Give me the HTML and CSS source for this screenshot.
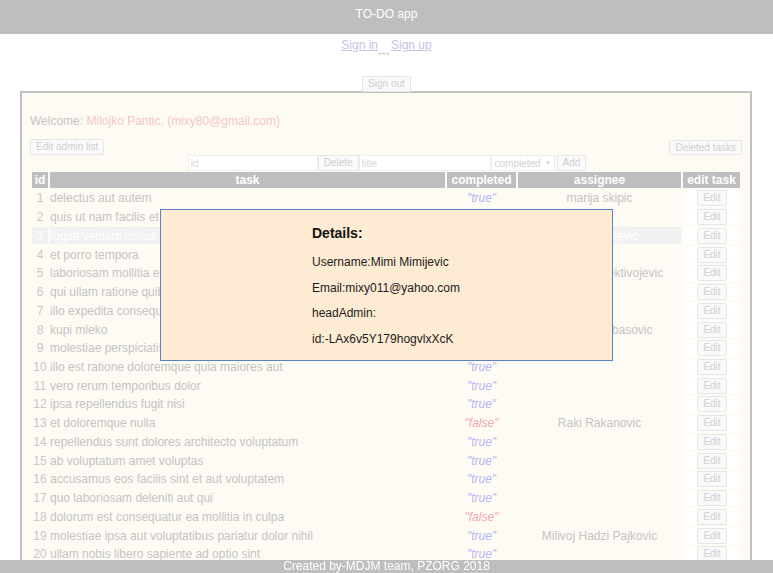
FILE: index.html
```html
<!DOCTYPE html>
<html>
<head>
<meta charset="utf-8">
<title>TO-DO app</title>
<link rel="stylesheet" href="styles.css">
</head>
<body>
<header class="topbar">TO-DO app</header>
<nav class="auth">
  <a href="#" class="auth-link">Sign in</a><span class="stars">***</span><a href="#" class="auth-link">Sign up</a>
</nav>
<div class="signout-row"><button class="btn">Sign out</button></div>
<main class="panel">
  <p class="welcome">Welcome: <span class="user">Milojko Pantic, (mixy80@gmail.com)</span></p>
  <div class="tools">
    <button class="btn">Edit admin list</button>
    <button class="btn">Deleted tasks</button>
  </div>
  <div class="form-row">
    <input class="field field-id" placeholder="id"><button class="btn btn-sq">Delete</button><input class="field field-title" placeholder="title"><span class="select">completed</span><button class="btn btn-sq">Add</button>
  </div>
  <table class="tasks">
    <thead>
      <tr><th class="c-id">id</th><th class="c-task">task</th><th class="c-done">completed</th><th class="c-who">assignee</th><th class="c-edit">edit task</th></tr>
    </thead>
    <tbody id="rows"></tbody>
  </table>
</main>
<div class="modal">
  <div class="modal-body">
    <h3 class="modal-title">Details:</h3>
    <p>Username:Mimi Mimijevic</p>
    <p>Email:mixy011@yahoo.com</p>
    <p>headAdmin:</p>
    <p>id:-LAx6v5Y179hogvlxXcK</p>
  </div>
</div>
<footer class="footer">Created by-MDJM team, PZORG 2018</footer>
<script src="app.js"></script>
</body>
</html>
```
FILE: app.js
```js
var data = [
  ["delectus aut autem", true, "marija skipic"],
  ["quis ut nam facilis et officia qui", true, ""],
  ["fugiat veniam minus", true, "Mimi Mimijevic"],
  ["et porro tempora", true, ""],
  ["laboriosam mollitia et enim quasi adipisci quia provident illum", true, "Objektiva Objektivojevic"],
  ["qui ullam ratione quibusdam voluptatem quia omnis", true, ""],
  ["illo expedita consequatur quia in", true, ""],
  ["kupi mleko", true, "Ababan Ababasovic"],
  ["molestiae perspiciatis ipsa", true, ""],
  ["illo est ratione doloremque quia maiores aut", true, ""],
  ["vero rerum temporibus dolor", true, ""],
  ["ipsa repellendus fugit nisi", true, ""],
  ["et doloremque nulla", false, "Raki Rakanovic"],
  ["repellendus sunt dolores architecto voluptatum", true, ""],
  ["ab voluptatum amet voluptas", true, ""],
  ["accusamus eos facilis sint et aut voluptatem", true, ""],
  ["quo laboriosam deleniti aut qui", true, ""],
  ["dolorum est consequatur ea mollitia in culpa", false, ""],
  ["molestiae ipsa aut voluptatibus pariatur dolor nihil", true, "Milivoj Hadzi Pajkovic"],
  ["ullam nobis libero sapiente ad optio sint", true, ""]
];
var tb = document.getElementById("rows");
var html = "";
data.forEach(function (r, i) {
  html += '<tr' + (i === 2 ? ' class="hover"' : '') + '>' +
    '<td class="c-id">' + (i + 1) + '</td>' +
    '<td class="c-task">' + r[0] + '</td>' +
    '<td class="c-done ' + (r[1] ? 'yes' : 'no') + '">"' + (r[1] ? 'true' : 'false') + '"</td>' +
    '<td class="c-who">' + r[2] + '</td>' +
    '<td class="c-edit"><button class="btn btn-edit">Edit</button></td></tr>';
});
tb.innerHTML = html;
```
FILE: styles.css
```css
html, body {
  margin: 0;
  padding: 0;
}
body {
  font-family: "Liberation Sans", Arial, sans-serif;
  font-size: 12px;
  color: #c4c4c4;
  background: #ffffff;
  height: 573px;
  overflow: hidden;
}
.topbar {
  height: 34px;
  box-sizing: border-box;
  padding-top: 6px;
  line-height: 16px;
  background: #bebebe;
  color: #ffffff;
  text-align: center;
  font-size: 12px;
}
.auth {
  text-align: center;
  margin-top: 4px;
  line-height: 14px;
  height: 28px;
}
.auth-link {
  color: #c9c0e4;
  text-decoration: underline;
}
.stars {
  font-size: 9px;
  letter-spacing: 0.5px;
  color: #c8c8c8;
  vertical-align: -9px;
  margin: 0 1px 0 0;
}
.signout-row {
  text-align: center;
  height: 15px;
  margin-top: 10px;
}
.btn {
  font-family: "Liberation Sans", Arial, sans-serif;
  font-size: 10px;
  color: #cfcfcf;
  background: #fafafa;
  border: 1px solid #e6e6e6;
  border-radius: 1px;
  height: 16px;
  padding: 0 5px;
  line-height: 14px;
  margin: 0;
  vertical-align: top;
}
.panel {
  margin: 0 21px 0 20px;
  border: 2px solid #c2c2c2;
  border-bottom: none;
  background: #fefbf4;
  padding: 0 8px;
  height: 500px;
}
.welcome {
  margin: 0;
  padding-top: 21px;
  line-height: 14px;
  color: #c4c4c4;
}
.user {
  color: #f5c6c6;
}
.tools {
  display: flex;
  justify-content: space-between;
  margin-top: 11px;
  height: 16px;
}
.tools .btn:last-child {
  margin-top: 1px;
  height: 15px;
}
.form-row {
  display: flex;
  justify-content: center;
  height: 16px;
  margin-left: 2px;
}
.field {
  box-sizing: border-box;
  height: 16px;
  border: 1px solid #eeeeee;
  background: #ffffff;
  font-family: "Liberation Sans", Arial, sans-serif;
  font-size: 10px;
  padding: 0 2px;
  margin: 0;
}
.field::placeholder {
  color: #dadada;
}
.field-id { width: 130px; }
.field-title { width: 132px; }
.btn-sq {
  border-radius: 0;
}
.select {
  box-sizing: border-box;
  height: 16px;
  width: 64px;
  border: 1px solid #eeeeee;
  background: #fefefe;
  font-size: 10px;
  line-height: 14px;
  color: #d2d2d2;
  padding-left: 3px;
  margin-right: 2px;
}
.select::after {
  content: "\25BC";
  font-size: 6px;
  margin-left: 4px;
  vertical-align: 2px;
}
.tasks {
  width: 712px;
  border-spacing: 2px;
  margin-top: -1px;
  table-layout: fixed;
}
.tasks th {
  background: #bebebe;
  color: #ffffff;
  font-weight: bold;
  height: 16px;
  line-height: 14px;
  padding: 0;
  font-size: 12px;
}
.tasks td {
  padding: 0;
  height: 16.74px;
  line-height: 14px;
  white-space: nowrap;
  overflow: hidden;
}
th.c-id { width: 16px; }
th.c-task { width: 395px; }
th.c-done { width: 69px; }
th.c-who { width: 163px; }
th.c-edit { width: 57px; }
td.c-id { text-align: center; color: #c8c8c8; }
td.c-task { text-align: left; }
td.c-done { text-align: center; font-style: italic; }
td.c-done.yes { color: #b2b6f2; }
td.c-done.no { color: #f4a8b0; }
td.c-who { text-align: center; }
td.c-edit { text-align: center; background: #fffffd; }
.btn-edit {
  width: 30px;
  padding: 0;
  margin-left: 1px;
}
tr.hover td {
  background: #f1f1f1;
  color: #ffffff;
}
tr.hover td.c-edit {
  background: #fffffd;
}
.modal {
  position: absolute;
  left: 160px;
  top: 209px;
  width: 453px;
  height: 152px;
  box-sizing: border-box;
  border: 1px solid #5a82c2;
  background: #fdebd3;
}
.modal-body {
  padding: 15px 0 0 151px;
  color: #1c1c1c;
}
.modal-title {
  font-size: 14px;
  margin: 0 0 14px;
  line-height: 16px;
  color: #111111;
}
.modal-body p {
  margin: 0 0 11.6px;
  line-height: 14px;
}
.footer {
  position: fixed;
  left: 0;
  right: 0;
  bottom: 0;
  height: 13px;
  line-height: 13px;
  background: #bebebe;
  color: #ffffff;
  text-align: center;
}
```
